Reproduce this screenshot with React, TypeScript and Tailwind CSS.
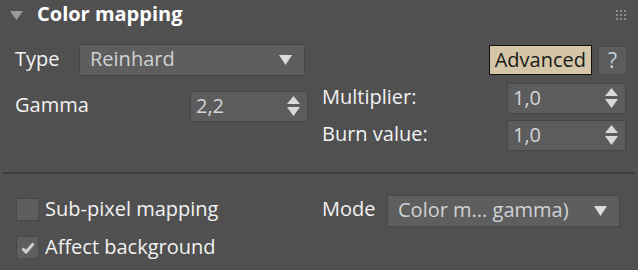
import React from "react";

const Spinner = ({ value, width }: { value: string; width: string }) => (
  <div
    className={`${width} h-[31px] flex items-center justify-between bg-[#5c5c5c] border border-[#464646] pl-[5px] pr-[7px]`}
  >
    <span className="text-[20px] text-[#d2d4d8] -mt-[2px]">{value}</span>
    <svg width="13" height="21" viewBox="0 0 13 21">
      <polygon points="6.5,0 13,8 0,8" fill="#d9d9d9" />
      <polygon points="0,11 13,11 6.5,20" fill="#d9d9d9" />
    </svg>
  </div>
);

const Dropdown = ({ value, width }: { value: string; width: string }) => (
  <div
    className={`${width} h-[32px] flex items-center justify-between bg-[#5e5e5e] border border-[#474747] pl-[10px] pr-[12px]`}
  >
    <span className="text-[20px] text-[#cfd2d6] -mt-[2px]">{value}</span>
    <svg width="13" height="10" viewBox="0 0 13 10">
      <polygon points="0,0 13,0 6.5,10" fill="#dcdcdc" />
    </svg>
  </div>
);

const Checkbox = ({ checked, label }: { checked?: boolean; label: string }) => (
  <div className="flex items-center gap-[6px] h-[23px]">
    <div className="w-[23px] h-[23px] bg-[#5e5e5e] border border-[#484848] flex items-center justify-center">
      {checked && (
        <svg width="14" height="12" viewBox="0 0 14 12">
          <path d="M1.5 6.5 L5 10 L12.5 1.5" stroke="#d0d0d0" strokeWidth="3" fill="none" />
        </svg>
      )}
    </div>
    <span className="text-[20px] text-[#f2f2f2] -mt-[2px]">{label}</span>
  </div>
);

export default function App() {
  return (
    <div className="w-[638px] h-[270px] bg-[#505050] overflow-hidden font-['Open_Sans',sans-serif] leading-none">
      {/* header */}
      <div className="flex items-center h-[30px] pl-[10px] pr-[12px]">
        <svg width="13" height="9" viewBox="0 0 13 9">
          <polygon points="0,0 13,0 6.5,9" fill="#9a9a9a" />
        </svg>
        <span className="ml-[14px] text-[20px] font-bold text-white -mt-[2px]">Color mapping</span>
        <div className="ml-auto grid grid-cols-3 gap-[2px]">
          {Array.from({ length: 9 }).map((_, i) => (
            <div key={i} className="w-[2px] h-[2px] bg-[#8c8c8c]" />
          ))}
        </div>
      </div>

      {/* type row */}
      <div className="flex items-center mt-[14px] pl-[15px] pr-[11px]">
        <span className="w-[64px] text-[20px] text-[#f2f2f2] -mt-[3px]">Type</span>
        <Dropdown value="Reinhard" width="w-[226px]" />
        <div className="ml-auto flex items-center gap-[6px]">
          <div className="h-[30px] px-[5px] flex items-center bg-[#d4c6a6] border border-[#111] text-[20px] text-[#1a1a1a]">
            Advanced
          </div>
          <div className="w-[29px] h-[29px] rounded-[4px] bg-[#5c5c5c] border border-[#4a4a4a] flex items-center justify-center text-[21px] text-[#c7d0dc]">
            ?
          </div>
        </div>
      </div>

      {/* gamma / multiplier / burn */}
      <div className="flex pl-[15px] pr-[12px] mt-[7px]">
        <div className="w-[293px] flex items-center justify-between mt-[8px] h-[31px]">
          <span className="text-[20px] text-[#f2f2f2] -mt-[3px]">Gamma</span>
          <Spinner value="2,2" width="w-[118px]" />
        </div>
        <div className="ml-auto w-[304px] flex flex-col gap-[6px]">
          <div className="flex items-center justify-between">
            <span className="text-[20px] text-[#f2f2f2] -mt-[4px]">Multiplier:</span>
            <Spinner value="1,0" width="w-[119px]" />
          </div>
          <div className="flex items-center justify-between">
            <span className="text-[20px] text-[#f2f2f2] -mt-[4px]">Burn value:</span>
            <Spinner value="1,0" width="w-[119px]" />
          </div>
        </div>
      </div>

      {/* separator */}
      <div className="mx-[3px] mt-[21px] h-[2px] bg-[#3c3c3c]" />

      {/* bottom */}
      <div className="flex pl-[16px] pr-[18px] mt-[21px]">
        <div className="flex flex-col gap-[15px] mt-[3px]">
          <Checkbox label="Sub-pixel mapping" />
          <Checkbox checked label="Affect background" />
        </div>
        <div className="ml-auto w-[298px] flex items-start justify-between">
          <span className="mt-[4px] text-[20px] text-[#f2f2f2]">Mode</span>
          <Dropdown value="Color m... gamma)" width="w-[233px]" />
        </div>
      </div>
    </div>
  );
}
